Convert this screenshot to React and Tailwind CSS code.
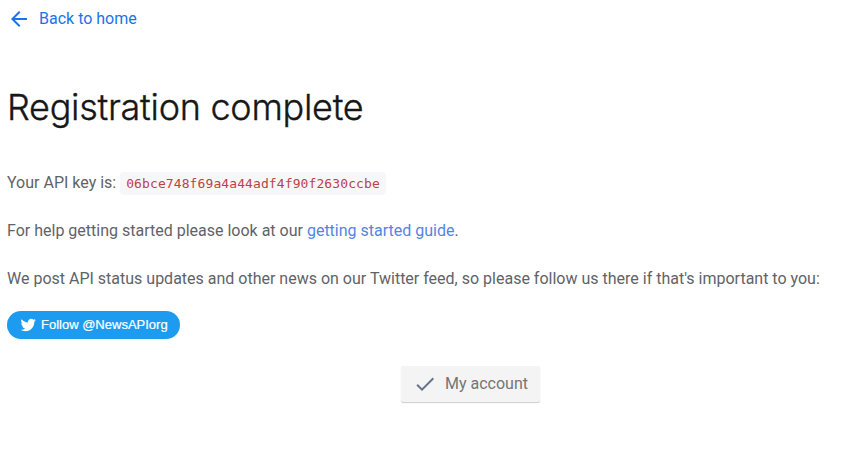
function BackIcon() {
  return (
    <svg className="size-6 shrink-0" viewBox="0 0 24 24" fill="#1a73e8">
      <path d="M20 11H7.83l5.59-5.59L12 4l-8 8 8 8 1.41-1.41L7.83 13H20v-2z" />
    </svg>
  );
}

function TwitterIcon() {
  return (
    <svg className="size-[18px] shrink-0" viewBox="0 0 24 24" fill="#fff">
      <path d="M23.643 4.937c-.835.37-1.732.62-2.675.733.962-.576 1.7-1.49 2.048-2.578-.9.534-1.897.922-2.958 1.13-.85-.904-2.06-1.47-3.4-1.47-2.572 0-4.658 2.086-4.658 4.66 0 .364.042.718.12 1.06-3.873-.195-7.304-2.05-9.602-4.868-.4.69-.63 1.49-.63 2.342 0 1.616.823 3.043 2.072 3.878-.764-.025-1.482-.234-2.11-.583v.06c0 2.257 1.605 4.14 3.737 4.568-.392.106-.803.162-1.227.162-.3 0-.593-.028-.877-.082.593 1.85 2.313 3.198 4.352 3.234-1.595 1.25-3.604 1.995-5.786 1.995-.376 0-.747-.022-1.112-.065 2.062 1.323 4.51 2.093 7.14 2.093 8.57 0 13.255-7.098 13.255-13.254 0-.2-.005-.402-.014-.602.91-.658 1.7-1.477 2.323-2.41z" transform="translate(1.2 1.2) scale(.9)" />
    </svg>
  );
}

function CheckIcon() {
  return (
    <svg className="size-6 shrink-0" viewBox="0 0 24 24" fill="#68748c">
      <path d="M9 16.17L4.83 12l-1.42 1.41L9 19 21 7l-1.41-1.41z" />
    </svg>
  );
}

export default function App() {
  return (
    <main className="h-[466px] w-[859px] overflow-hidden bg-white pl-[7px] font-['Roboto',sans-serif] text-base leading-6 text-[#5f6368]">
      <a href="#" className="flex w-fit items-center gap-2 pt-[7px] text-[#1a73e8]">
        <BackIcon />
        <span>Back to home</span>
      </a>
      <h1 className="mt-[52px] h-12 whitespace-nowrap font-['Inter',sans-serif] text-[36px] leading-12 font-light tracking-[-0.28px] text-[#171717] [-webkit-text-stroke:0.35px_#171717]">
        Registration complete
      </h1>
      <p className="mt-10 flex h-6 items-center">
        <span>Your API key is:</span>
        <code className="ml-1 flex h-[23px] w-[266px] items-center rounded-[4px] bg-[#f7f7f9] pl-1.5 font-['DejaVu_Sans_Mono',monospace] text-[13px] leading-none tracking-[0.1px] text-[#bd4147]">
          06bce748f69a4a44adf4f90f2630ccbe
        </code>
      </p>
      <p className="mt-6">
        For help getting started please look at our{" "}
        <a href="#" className="text-[#5484e4]">getting started guide</a>.
      </p>
      <p className="mt-6 whitespace-nowrap">
        We post API status updates and other news on our Twitter feed, so please follow us there if that's important to you:
      </p>
      <a
        href="#"
        className="mt-5 flex h-7 w-[173px] items-center gap-1 rounded-full bg-[#1d9bf0] pl-3 font-['Liberation_Sans',sans-serif] text-[13px] leading-none text-white"
      >
        <TwitterIcon />
        <span className="pb-0.5 whitespace-nowrap [-webkit-text-stroke:0.2px_white]">Follow @NewsAPIorg</span>
      </a>
      <button className="mt-[27px] ml-[394px] flex h-9 w-[139px] items-center gap-2 rounded-[2px] bg-[#f4f4f4] pl-3 text-[#757575] shadow-[0_1px_1px_rgba(0,0,0,0.2)]">
        <CheckIcon />
        <span>My account</span>
      </button>
    </main>
  );
}
